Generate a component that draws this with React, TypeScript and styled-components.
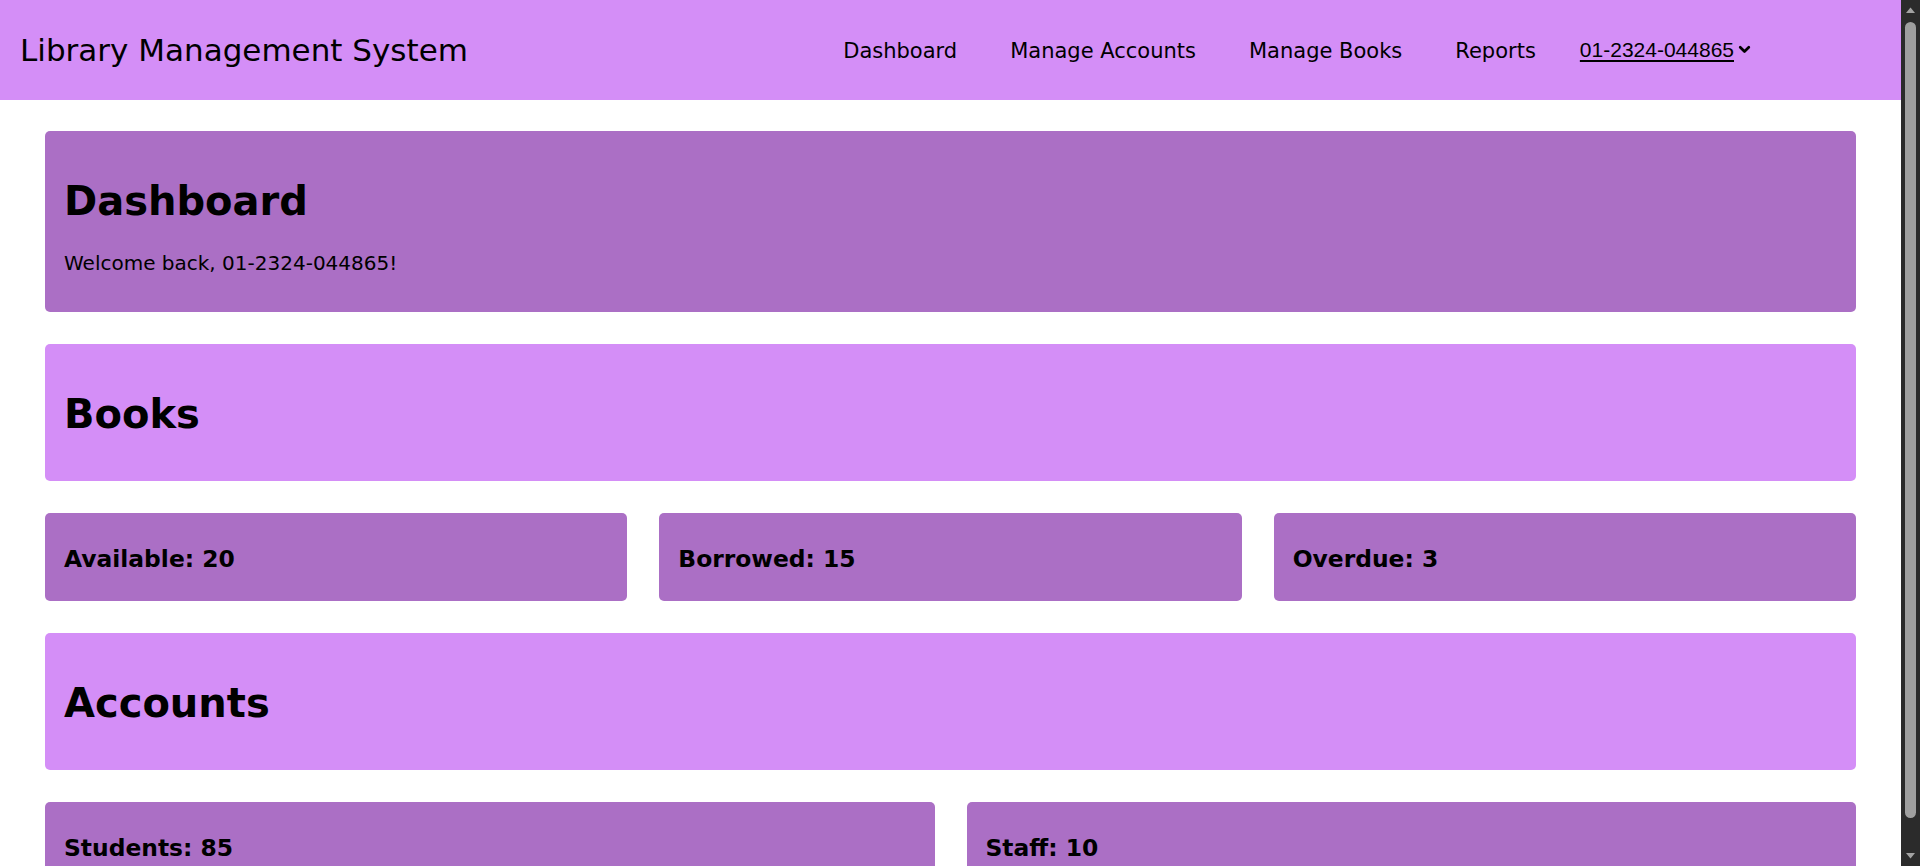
import React from "react";
import styled, { createGlobalStyle } from "styled-components";

const LIGHT = "#d48ef7";
const DARK = "#ab6fc5";

const GlobalStyle = createGlobalStyle`
  html {
    background: #ffffff;
    scrollbar-width: none;
  }
  body {
    margin: 0;
    font-family: "DejaVu Sans", Verdana, sans-serif;
    color: #000000;
    background: #ffffff;
  }
`;

const Page = styled.div`
  margin-right: 19px;
`;

const Header = styled.header`
  height: 100px;
  background: ${LIGHT};
  display: flex;
  align-items: center;
  justify-content: space-between;
  padding: 0 150px 0 20px;
  box-sizing: border-box;
`;

const Brand = styled.div`
  font-size: 31px;
  font-weight: 400;
`;

const NavArea = styled.nav`
  display: flex;
  align-items: center;
  margin-top: 2px;
`;

const NavLinks = styled.div`
  display: flex;
  align-items: center;
  gap: 53px;
`;

const NavLink = styled.a`
  font-size: 21px;
  color: #000;
  text-decoration: none;
  cursor: pointer;
`;

const UserMenu = styled.button`
  margin-left: 44px;
  display: flex;
  align-items: center;
  gap: 4px;
  background: none;
  border: none;
  padding: 0;
  margin-top: -3px;
  cursor: pointer;
  color: #000;
`;

const UserName = styled.span`
  font-family: "Liberation Sans", Arial, sans-serif;
  font-size: 21px;
  text-decoration: underline;
  text-underline-offset: 3px;
`;

const Main = styled.main`
  display: flex;
  flex-direction: column;
  gap: 32px;
  padding: 31px 45px 40px;
`;

const Card = styled.section<{ $tone: "light" | "dark" }>`
  background: ${(p) => (p.$tone === "light" ? LIGHT : DARK)};
  border-radius: 5px;
  padding: 20px 19px 17px;
`;

const Title = styled.h1`
  font-size: 40px;
  font-weight: 700;
  margin: 27px 0;
  line-height: normal;
`;

const Welcome = styled.p`
  font-size: 20px;
  margin: 20px 0;
`;

const StatGrid = styled.div<{ $cols: number }>`
  display: grid;
  grid-template-columns: repeat(${(p) => p.$cols}, 1fr);
  gap: 32px;
`;

const StatCard = styled.div`
  background: ${DARK};
  border-radius: 5px;
  padding: 9px 19px 4px;
`;

const StatLabel = styled.h3`
  font-size: 23.4px;
  font-weight: 700;
  margin: 23.4px 0;
`;

const ScrollBar = styled.div`
  position: fixed;
  top: 0;
  right: 0;
  width: 19px;
  height: 100vh;
  background: #2b2b2b;
  display: flex;
  flex-direction: column;
  align-items: center;
`;

const ScrollArrow = styled.div`
  height: 20px;
  width: 19px;
  display: flex;
  align-items: center;
  justify-content: center;
`;

const ScrollThumb = styled.div`
  width: 11px;
  flex: 1;
  margin: 2px 0 28px;
  border-radius: 6px;
  background: #9f9f9f;
`;

const Chevron = () => (
  <svg width="13" height="9" viewBox="0 0 13 9" aria-hidden="true">
    <path d="M2.2 2.2 L6.5 6.5 L10.8 2.2" fill="none" stroke="#000" strokeWidth="2.7" strokeLinecap="round" strokeLinejoin="round" />
  </svg>
);

const Triangle = ({ down }: { down?: boolean }) => (
  <svg width="9" height="6" viewBox="0 0 9 6" aria-hidden="true">
    <path d={down ? "M0 0 L9 0 L4.5 5.5 Z" : "M0 6 L9 6 L4.5 0.5 Z"} fill="#a3a3a3" />
  </svg>
);

const bookStats = [
  { label: "Available", value: 20 },
  { label: "Borrowed", value: 15 },
  { label: "Overdue", value: 3 },
];

const accountStats = [
  { label: "Students", value: 85 },
  { label: "Staff", value: 10 },
];

export default function App() {
  const user = "01-2324-044865";
  return (
    <>
      <GlobalStyle />
      <Page>
        <Header>
          <Brand>Library Management System</Brand>
          <NavArea>
            <NavLinks>
              <NavLink>Dashboard</NavLink>
              <NavLink>Manage Accounts</NavLink>
              <NavLink>Manage Books</NavLink>
              <NavLink>Reports</NavLink>
            </NavLinks>
            <UserMenu>
              <UserName>{user}</UserName>
              <Chevron />
            </UserMenu>
          </NavArea>
        </Header>
        <Main>
          <Card $tone="dark">
            <Title>Dashboard</Title>
            <Welcome>Welcome back, {user}!</Welcome>
          </Card>
          <Card $tone="light">
            <Title>Books</Title>
          </Card>
          <StatGrid $cols={3}>
            {bookStats.map((s) => (
              <StatCard key={s.label}>
                <StatLabel>
                  {s.label}: {s.value}
                </StatLabel>
              </StatCard>
            ))}
          </StatGrid>
          <Card $tone="light">
            <Title>Accounts</Title>
          </Card>
          <StatGrid $cols={2}>
            {accountStats.map((s) => (
              <StatCard key={s.label}>
                <StatLabel>
                  {s.label}: {s.value}
                </StatLabel>
              </StatCard>
            ))}
          </StatGrid>
        </Main>
      </Page>
      <ScrollBar aria-hidden="true">
        <ScrollArrow>
          <Triangle />
        </ScrollArrow>
        <ScrollThumb />
        <ScrollArrow>
          <Triangle down />
        </ScrollArrow>
      </ScrollBar>
    </>
  );
}
